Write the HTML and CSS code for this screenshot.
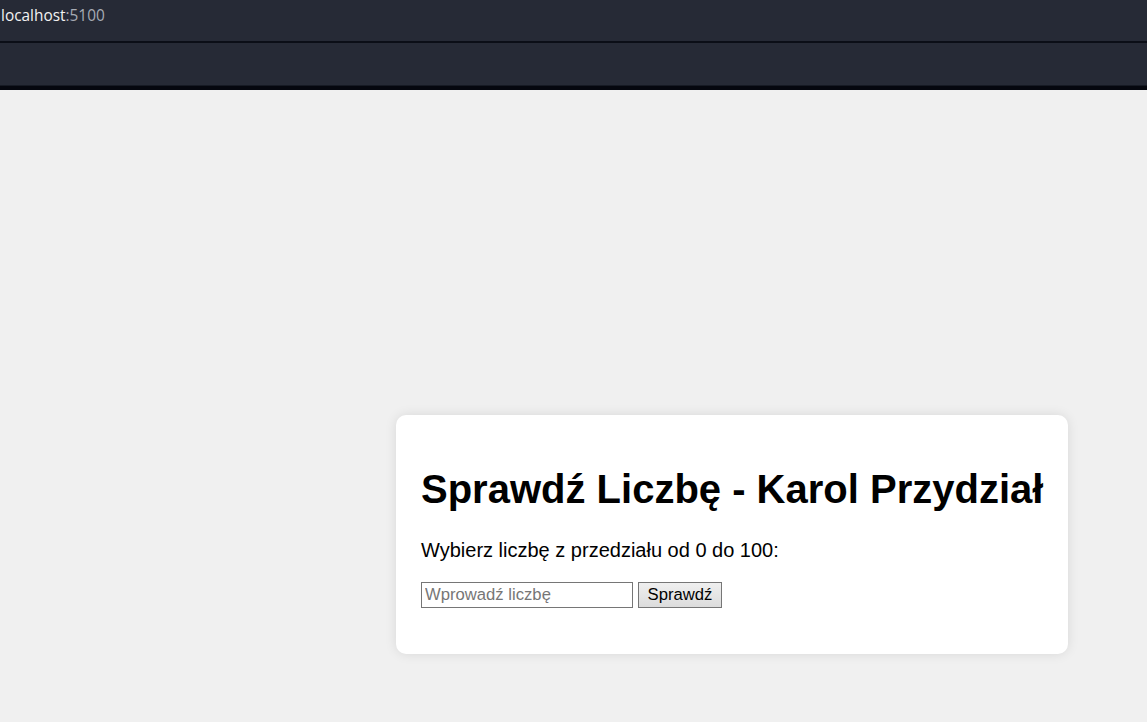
FILE: index.html
```html
<!DOCTYPE html>
<html lang="pl">
<head>
<meta charset="utf-8">
<title>Sprawdź Liczbę</title>
<link rel="stylesheet" href="styles.css">
</head>
<body>
<header class="chrome">
  <div class="address-bar"><span class="host">localhost</span><span class="port">:5100</span></div>
  <div class="sep"></div>
  <div class="toolbar"></div>
  <div class="bottom-edge"></div>
</header>
<main class="page">
  <section class="card">
    <h1 class="title">Sprawdź Liczbę - Karol Przydział</h1>
    <p class="lead">Wybierz liczbę z przedziału od 0 do 100:</p>
    <div class="form-row">
      <input class="number-input" type="text" placeholder="Wprowadź liczbę"><button class="check-btn" type="button">Sprawdź</button>
    </div>
    <p class="result"></p>
  </section>
</main>
</body>
</html>
```
FILE: styles.css
```css
html, body {
  margin: 0;
  padding: 0;
}
body {
  background: #f0f0f0;
  font-family: "Liberation Sans", Arial, sans-serif;
  font-size: 20px;
  color: #000;
  height: 722px;
  overflow: hidden;
}
.chrome {
  display: flex;
  flex-direction: column;
}
.address-bar {
  height: 41px;
  background: #262a36;
  box-sizing: border-box;
  padding: 5px 0 0 1px;
  font-family: "Open Sans", "Noto Sans", sans-serif;
  font-size: 15.4px;
  line-height: 22px;
}
.host { color: #f2f2f2; }
.port { color: #a7abb4; }
.sep {
  height: 2px;
  background: #0b0e17;
}
.toolbar {
  height: 42px;
  background: #262a36;
}
.bottom-edge {
  height: 1px;
  background: #161a24;
  border-bottom: 4px solid #05070f;
}
.page {
  padding: 325px 0 0 396px;
}
.card {
  display: inline-block;
  background: #fff;
  border-radius: 10px;
  box-shadow: 0 0 12px rgba(0, 0, 0, 0.1);
  padding: 25px 25px;
}
.title {
  font-size: 40px;
  font-weight: bold;
  margin: 26.8px 0;
  white-space: nowrap;
}
.lead {
  margin: 20px 0;
  font-size: 20px;
}
.form-row {
  display: flex;
  align-items: center;
  gap: 5px;
  height: 26px;
}
.number-input {
  box-sizing: border-box;
  width: 212px;
  height: 26px;
  font-family: "Liberation Sans", Arial, sans-serif;
  font-size: 16.67px;
  padding: 1px 3px;
  border: 1.5px solid #767676;
  border-radius: 0;
  margin: 0;
}
.number-input::placeholder {
  color: #767676;
}
.check-btn {
  box-sizing: border-box;
  width: 84px;
  height: 26px;
  font-family: "Liberation Sans", Arial, sans-serif;
  font-size: 16.67px;
  padding: 0 8px;
  border: 1.5px solid #767676;
  border-radius: 0;
  background: linear-gradient(#efefef, #dcdcdc);
  color: #000;
  margin: 0;
}
.result {
  margin: 21px 0 0;
}
```
